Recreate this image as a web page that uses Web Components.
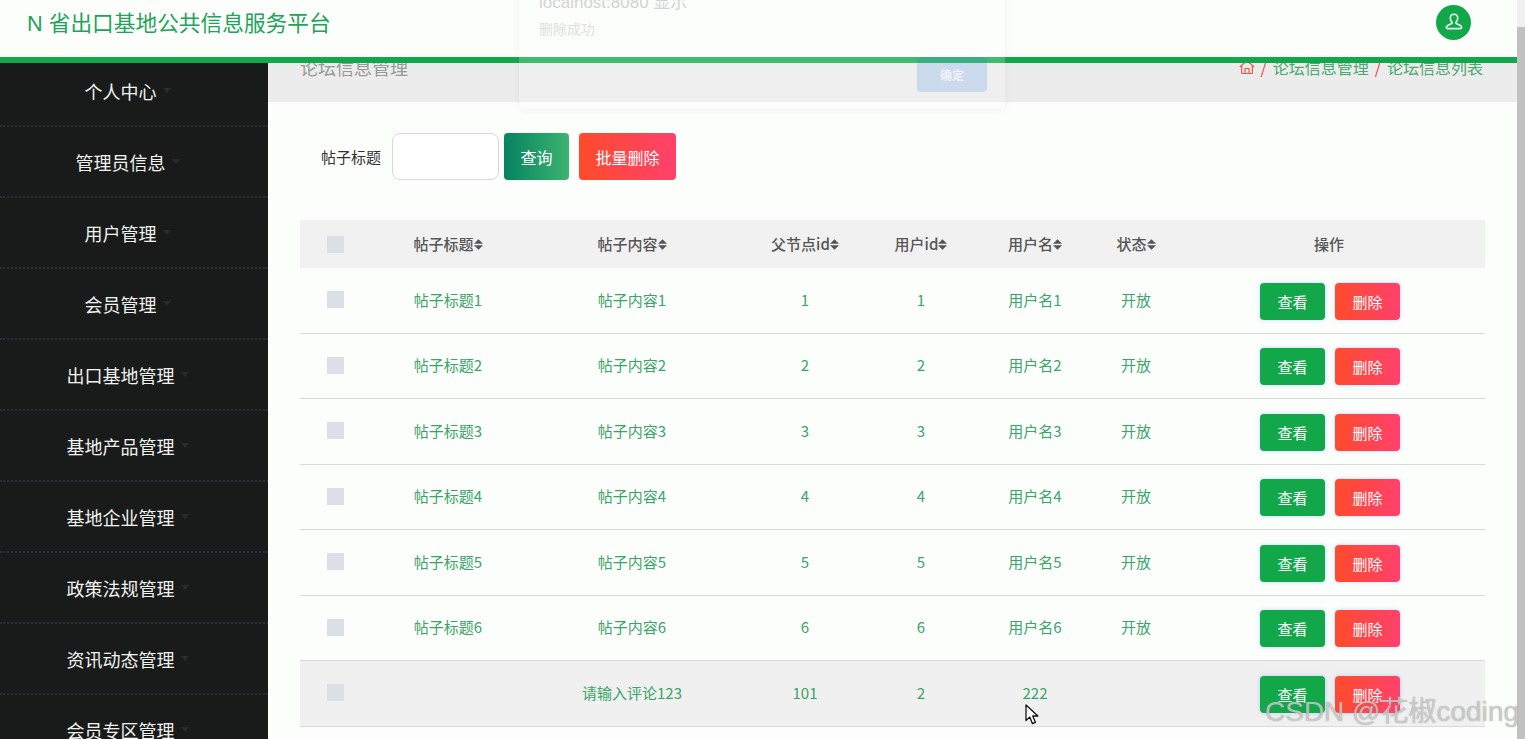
<!DOCTYPE html>
<html lang="zh"><head><meta charset="utf-8"><title>论坛信息管理</title>
<style>
html,body{margin:0;height:739px;overflow:hidden;background:#fcfefc}
body{font-family:"Noto Sans CJK SC","Noto Sans",sans-serif;position:relative}
app-shell{width:1525px;height:739px}
</style></head><body>
<template id="t-shell"><style>
:host{display:flex;height:739px;overflow:hidden;position:relative}
.main{flex:1;min-width:0;display:flex;flex-direction:column;height:739px;overflow:hidden}
.body{flex:1;display:flex;min-height:0;margin-top:-6.500px}
.content{flex:1;min-width:0;display:flex;flex-direction:column}
.page{padding:0 32px;display:flex;flex-direction:column}
</style>
<div class="main">
<app-header></app-header>
<div class="body"><side-menu></side-menu>
<div class="content"><crumb-bar></crumb-bar>
<div class="page"><search-bar></search-bar><forum-table></forum-table></div></div></div>
</div>
<fake-scroll></fake-scroll>
<fade-dialog></fade-dialog>
<video-mark></video-mark>
</template>

<script>
class Base extends HTMLElement{
  constructor(){super();this.attachShadow({mode:'open'})}
  render(html){this.shadowRoot.innerHTML=html}
}
customElements.define('app-shell',class extends Base{connectedCallback(){this.shadowRoot.appendChild(document.getElementById('t-shell').content.cloneNode(true))}});

customElements.define('app-header',class extends Base{connectedCallback(){this.render(`<style>
:host{display:flex;align-items:center;justify-content:space-between;box-sizing:border-box;height:62.500px;flex:none;background:#fcfefc;border-bottom:6.500px solid #12a84a;position:relative;z-index:2;padding:0 46px 9px 27px}
.t{font-size:21.700px;color:#22a458;line-height:30px;white-space:pre;font-family:"Liberation Sans","Noto Sans CJK SC",sans-serif}
.u{width:35px;height:35px;border-radius:50%;background:#12a84a;display:flex;align-items:center;justify-content:center;margin-top:-3px}
</style><div class="t">N 省出口基地公共信息服务平台</div>
<div class="u"><svg width="20" height="20" viewBox="0 0 20 20" fill="none" stroke="#e8f7ee" stroke-width="1.600"><path d="M10 2.200c-2.300 0-3.700 1.800-3.700 4 0 1.600.7 3 1.700 3.900v1.300c-1.500 1-5.200 1.800-5.600 3.600-.2.9.3 1.600 1.200 1.600h12.800c.9 0 1.400-.7 1.200-1.600-.4-1.800-4.100-2.600-5.600-3.600v-1.300c1-.9 1.700-2.300 1.700-3.900 0-2.200-1.400-4-3.700-4z"/></svg></div>`)}});

customElements.define('side-menu',class extends Base{connectedCallback(){
const items=['个人中心','管理员信息','用户管理','会员管理','出口基地管理','基地产品管理','基地企业管理','政策法规管理','资讯动态管理','会员专区管理'];
this.render(`<style>
:host{display:block;width:268px;flex:none;background:#191b1a;overflow:hidden}
.i{box-sizing:border-box;height:71px;border-bottom:2px dotted #2b2e3a;display:flex;align-items:center;justify-content:center;padding:0 27px 0 0;color:#f0f2f0;font-size:18px;line-height:24px}
span{position:relative}
span::after{content:"";position:absolute;left:100%;top:9px;margin-left:6px;border:4px solid transparent;border-top:5px solid #2a2c2b;border-bottom:0}
</style>${items.map(s=>`<div class="i"><span>${s}</span></div>`).join('')}`)}});

customElements.define('crumb-bar',class extends Base{connectedCallback(){this.render(`<style>
:host{display:flex;justify-content:space-between;box-sizing:border-box;height:46px;background:#ececec;padding:0 34px 0 32px;flex:none;overflow:hidden;align-items:flex-start}
.h{font-size:18px;line-height:24px;color:#999;margin-top:-1px}
.c{display:flex;align-items:center;font-size:16px;line-height:22px;color:#4aa870;margin-top:0;white-space:pre}
.s{color:#e8453c;padding:0 6px}
.s.first{padding-left:5px}
svg{display:block}
</style><div class="h">论坛信息管理</div>
<div class="c"><svg width="16" height="16" viewBox="0 0 16 16" fill="none" stroke="#e65a50" stroke-width="1.200"><path d="M.8 8 8 1.500 15.200 8M2.700 6.600V14.500h10.600V6.600M6 14.500V9.500h4v5"/></svg><span class="s first">/</span>论坛信息管理<span class="s">/</span>论坛信息列表</div>`)}});

customElements.define('search-bar',class extends Base{connectedCallback(){this.render(`<style>
:host{display:flex;align-items:center;height:47px;margin-top:31px;margin-bottom:40px;padding-left:21px;flex:none}
label{font-size:15px;color:#333;line-height:20px;margin-right:11px}
.inp{box-sizing:border-box;width:107px;height:47px;border:1px solid #d6d9d6;border-radius:8px;background:#fff;margin-right:5px}
.b{box-sizing:border-box;height:47px;border-radius:4px;color:#fff;font-size:16px;display:flex;align-items:center;justify-content:center}
.q{width:65px;background:linear-gradient(90deg,#068360,#3cb371);margin-right:10px}
.d{width:97px;background:linear-gradient(90deg,#ff4b2b,#ff416c)}
</style><label>帖子标题</label><div class="inp"></div><div class="b q">查询</div><div class="b d">批量删除</div>`)}});

const COLS='71px 154px 214px 132px 100px 128px 74px 312px';
customElements.define('forum-table',class extends Base{connectedCallback(){
const sort='<svg width="9" height="11" viewBox="0 0 9 11" fill="#555"><path d="M0 4.700 4.500.2 9 4.700zM0 6.300 4.500 10.800 9 6.300z"/></svg>';
const head=['帖子标题','帖子内容','父节点id','用户id','用户名','状态'];
const rows=[1,2,3,4,5,6].map(n=>['帖子标题'+n,'帖子内容'+n,n,n,'用户名'+n,'开放']);
rows.push(['','请输入评论123',101,2,222,'']);
const row=(r,i)=>`<div class="r${i==6?' last':''}"><div class="c"><b class="cb"></b></div>${r.map(v=>`<div class="c">${v}</div>`).join('')}<div class="c ops"><div class="btn g">查看</div><div class="btn x">删除</div></div></div>`;
this.render(`<style>
:host{display:block;width:1185px;font-size:15px;color:#3aa568}
.r,.h{display:grid;grid-template-columns:${COLS};align-items:center;justify-items:center}
.h{height:48px;background:#f0f1f0;color:#555;font-weight:500}
.r{box-sizing:border-box;height:65.500px;border-bottom:1px solid #d8d9d8}
.r.last{background:#eff0ef}
.c{display:flex;align-items:center;justify-content:center;line-height:20px;white-space:pre}
.r .c{margin-top:-1px}
.cb{display:block;width:17px;height:17px;background:#dcdfe6}
.r .ops{gap:10px;margin:2px 0 0 2px}
.btn{box-sizing:border-box;width:65px;height:37px;border-radius:4px;color:#fff;display:flex;align-items:center;justify-content:center;font-size:15px;box-shadow:0 0 4px rgba(80,140,255,.35);padding-top:1px}
.g{background:#12a84a}
.x{background:linear-gradient(90deg,#ff4b2b,#ff416c)}
</style>
<div class="h"><div class="c"><b class="cb"></b></div>${head.map(h=>`<div class="c">${h}${sort}</div>`).join('')}<div class="c">操作</div></div>
${rows.map(row).join('')}`)}});

customElements.define('fake-scroll',class extends Base{connectedCallback(){this.render(`<style>
:host{display:flex;flex-direction:column;width:8px;flex:none;height:739px;background:#f1f1f1}
.t{margin-top:27px;flex:1;background:#c1c1c1}
</style><div class="t"></div>`)}});

customElements.define('fade-dialog',class extends Base{connectedCallback(){this.render(`<style>
:host{position:absolute;left:519px;top:-16px;width:486px;height:125px;box-sizing:border-box;background:rgba(255,255,255,.2);border-radius:4px;box-shadow:0 1px 6px rgba(0,0,0,.06);z-index:5;padding:8px 20px;color:#d9dbd9;font-size:14px}
.a{line-height:22px;font-size:17px;color:#d2d4d2;font-family:"Liberation Sans","Noto Sans CJK SC",sans-serif}
.m{line-height:20px;margin-top:4px;color:#dcdedc}
.f{position:absolute;right:18px;top:73px;width:70px;height:35px;border-radius:4px;background:rgba(26,115,232,.16);color:#f0f2f5;font-size:12px;font-weight:700;display:flex;align-items:center;justify-content:center}
</style><div class="a">localhost:8080 显示</div><div class="m">删除成功</div><div class="f">确定</div>`)}});

customElements.define('video-mark',class extends Base{connectedCallback(){this.render(`<style>
:host{display:block;position:absolute;inset:0;pointer-events:none;z-index:6}
.w{position:absolute;left:1265px;top:694px;font-size:28px;line-height:36px;white-space:pre;font-family:"Liberation Sans","Noto Sans CJK SC",sans-serif;color:rgba(255,255,255,.55);text-shadow:0 0 1px rgba(110,110,110,.85)}
svg{position:absolute;left:1025px;top:704px}
</style><span class="w">CSDN @花椒coding</span>
<svg width="15" height="22" viewBox="0 0 15 22"><path d="M1 1v15.500l3.800-3.400 2.600 6.500 3-1.300-2.700-6.300h5.200z" fill="#fff" stroke="#111" stroke-width="1.300" stroke-linejoin="round"/></svg>`)}});
</script>
<app-shell></app-shell>
</body></html>
